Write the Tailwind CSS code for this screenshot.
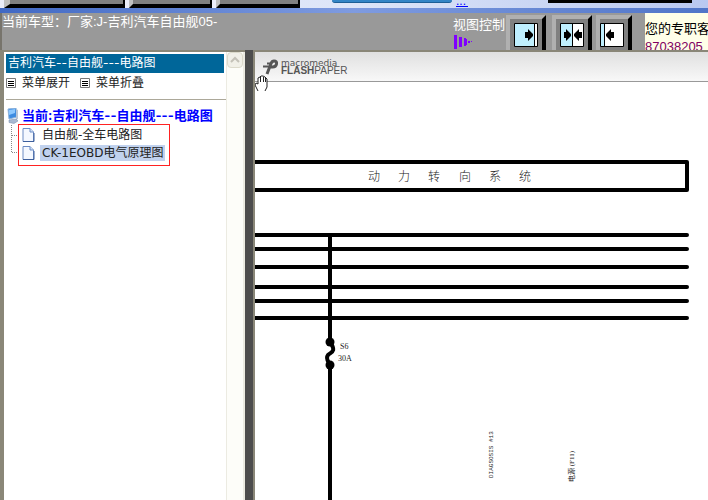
<!DOCTYPE html>
<html lang="zh-CN">
<head>
  <meta charset="UTF-8">
  <meta name="viewport" content="width=device-width, initial-scale=1.0">
  <title>吉利汽车--自由舰---电路图</title>
  <script src="https://cdn.jsdelivr.net/npm/@tailwindcss/browser@4"></script>
</head>
<body class="h-screen flex flex-col overflow-hidden bg-[#999] font-['Liberation_Sans','Noto_Sans_CJK_SC',sans-serif]">

  <!-- Toolbar -->
  <div class="h-2 shrink-0 flex bg-linear-to-r from-[#e6ebfa] via-[#dde5f8] to-[#b9c8f0] overflow-hidden">
    <div class="w-[300px] shrink-0 flex gap-1 pl-1 bg-[#eceefa]">
      <button class="w-[121px] bg-[#808080] border-b-4 border-r-2 border-l-6 border-black border-l-[#c0c0c0]" aria-label="菜单一"></button>
      <button class="w-[83px] bg-[#808080] border-b-4 border-r-2 border-l-4 border-black border-l-[#c0c0c0]" aria-label="菜单二"></button>
      <button class="w-[84px] bg-[#808080] border-b-4 border-r-2 border-l-4 border-black border-l-[#c0c0c0]" aria-label="菜单三"></button>
    </div>
    <div class="ml-8 w-30 h-[3px] rounded-b bg-[#3385c6] border-b border-[#1d5f96]"></div>
    <a href="#" class="ml-1 w-3 h-[7px] border-b border-[#00f] text-[#00f] text-[12px] leading-[2px]">...</a>
    <div class="ml-20 w-36 h-[3px] bg-black"></div>
  </div>
  <div class="h-[5px] shrink-0 bg-linear-to-r from-[#4169c4] via-[#7f9be0] to-[#5075c8]"></div>

  <!-- Header -->
  <header class="h-[37px] shrink-0 flex border-l-2 border-[#77746c] bg-[#999] text-white text-[13px] overflow-hidden">
    <h1 class="flex-1 pt-px leading-4 whitespace-nowrap">当前车型：厂家:J-吉利汽车自由舰05-</h1>
    <div class="w-[53px] pt-1 leading-4 whitespace-nowrap">
      视图控制
      <svg class="block mt-0.5" width="22" height="14" fill="#8000ff">
        <rect x="1" y="0" width="3" height="14"/>
        <rect x="6" y="2" width="3" height="10"/>
        <path d="M11 3h2v1h1v6h-1v1h-2z"/>
        <path d="M15 6h2v2h-2zM18 6h1v1h-1z"/>
      </svg>
    </div>
    <div class="flex items-start pt-0.5 pr-[13px]">
      <button class="w-10 h-11 flex items-start pt-1 pl-1 bg-[#808080] border-4 border-[#b0b0b0] border-r-black border-b-black" aria-label="向右展开">
        <svg class="shrink-0" width="24" height="24">
          <path d="M.5 .5h23v23h-23z" fill="#fff" stroke="#000"/>
          <path d="M1 1h19v22H1z" fill="#bfefff"/>
          <path d="M20.500 1v22" stroke="#000"/>
          <path d="M11 9h3V6l5 5v2l-5 5v-3h-3z"/>
        </svg>
      </button>
      <button class="ml-1.5 w-10 h-11 flex items-start pt-1 pl-1 bg-[#808080] border-4 border-[#b0b0b0] border-r-black border-b-black" aria-label="居中">
        <svg class="shrink-0" width="24" height="24">
          <path d="M.5 .5h23v23h-23z" fill="#fff" stroke="#000"/>
          <path d="M1 1h11v22H1z" fill="#bfefff"/>
          <path d="M12.500 1v22" stroke="#000"/>
          <path d="M4 9h2V6l5 5v2l-5 5v-3H4zM22 9h-3V6l-5 5v2l5 5v-3h3z"/>
        </svg>
      </button>
      <button class="ml-1 w-9 h-11 flex items-start pt-1 bg-[#808080] border-4 border-[#b0b0b0] border-r-black border-b-black" aria-label="向左收起">
        <svg class="shrink-0" width="24" height="24">
          <path d="M.5 .5h23v23h-23z" fill="#fff" stroke="#000"/>
          <path d="M1 1h3v22H1z" fill="#bfefff"/>
          <path d="M4.500 1v22" stroke="#000"/>
          <path d="M14 9h-3V6l-5 5v2l5 5v-3h3z"/>
        </svg>
      </button>
    </div>
    <div class="w-[63px] bg-[#ffffe8] pt-2 text-black leading-4 whitespace-nowrap overflow-hidden">
      <p>您的专职客服</p>
      <p class="text-[#800060] leading-5">87038205</p>
    </div>
  </header>

  <div class="flex-1 min-h-0 flex">
    <!-- Tree menu -->
    <aside class="w-[245px] shrink-0 flex bg-white border-t-2 border-l-4 border-[#8a8778] text-[12px] text-[#222]">
      <div class="flex-1 min-w-0 pl-0.5">
        <h2 class="mt-0.5 mr-0.5 px-0.5 h-[19px] leading-[18px] bg-[#069] text-white font-['Inter','Noto_Sans_CJK_SC',sans-serif] whitespace-nowrap">吉利汽车--自由舰---电路图</h2>
        <div class="h-[27px] flex items-start pt-0.5 border-b border-[#aca899] leading-4">
          <button class="flex items-center gap-1.5">
            <svg width="10" height="10"><path d="M.5 .5h9v9h-9z" fill="#fff" stroke="#777"/><path d="M2 3.500h6M2 5.500h6M2 7.500h6" stroke="#000"/></svg>
            菜单展开
          </button>
          <button class="flex items-center gap-1.5 ml-2.5">
            <svg width="10" height="10"><path d="M.5 .5h9v9h-9z" fill="#fff" stroke="#777"/><path d="M2 3.500h6M2 5.500h6M2 7.500h6" stroke="#000"/></svg>
            菜单折叠
          </button>
        </div>
        <div class="flex items-center mt-2 h-4 gap-[3px] text-[13px] font-bold text-[#00f] whitespace-nowrap">
          <svg class="shrink-0" width="13" height="16">
            <path d="M2 1l8-1 1 9-8 2z" fill="#3d8be0" stroke="#8fb4dc"/>
            <path d="M3 2l6-1 0 4-6 2z" fill="#8cc8ff"/>
            <path d="M10 1l2 1v9l-2 1z" fill="#b8c4d4"/>
            <path d="M3 12l7-1 2 2-4 2.500-5-1z" fill="#a9bad2" stroke="#7288a8" stroke-width=".5"/>
          </svg>
          <a href="#" class="font-['Inter','Noto_Sans_CJK_SC',sans-serif]">当前:吉利汽车--自由舰---电路图</a>
        </div>
        <div class="flex font-['DejaVu_Sans','Noto_Sans_CJK_SC',sans-serif]">
          <svg class="shrink-0" width="12" height="42" fill="none" stroke="#888" stroke-dasharray="1 1">
            <path d="M5.500 1v27M6 11.500h6M6 28.500h6"/>
          </svg>
          <ul class="w-[152px] h-[42px] border border-[#f22] pt-px pl-[3px] whitespace-nowrap leading-4">
            <li class="h-[18px] flex items-center gap-[5px]">
              <svg width="13" height="14"><path d="M1 .5h7l3.500 3.500v9.500H1z" fill="#f4f8ff" stroke="#6c8cc4"/><path d="M8 .5V4h3.500" fill="#cfe0f8" stroke="#6c8cc4"/><path d="M1 13.500h11V5" fill="none" stroke="#3d5f9c"/></svg>
              <a href="#" class="px-0.5">自由舰-全车电路图</a>
            </li>
            <li class="h-[18px] flex items-center gap-[5px]">
              <svg width="13" height="14"><path d="M1 .5h7l3.500 3.500v9.500H1z" fill="#f4f8ff" stroke="#6c8cc4"/><path d="M8 .5V4h3.500" fill="#cfe0f8" stroke="#6c8cc4"/><path d="M1 13.500h11V5" fill="none" stroke="#3d5f9c"/></svg>
              <a href="#" class="px-0.5 bg-[#c1d2ee]">CK-1EOBD电气原理图</a>
            </li>
          </ul>
        </div>
      </div>
      <div class="w-[19px] bg-[#fdfdf9] border-l border-r-2 border-[#ecebe2]">
        <button class="block w-4 h-4 rounded-sm bg-[#f1f0e8] border border-[#dcdacb]" aria-label="向上滚动">
          <svg class="block mx-auto" width="10" height="8"><path d="M1 6l4-4 4 4" fill="none" stroke="#c4c2b8" stroke-width="2"/></svg>
        </button>
      </div>
    </aside>

    <div class="w-2 shrink-0 bg-[#4d4d4d]"></div>

    <!-- Document viewer -->
    <main class="relative flex-1 min-w-0 flex flex-col bg-white border-t-2 border-l-2 border-[#8a8778] overflow-hidden">
      <div class="h-[30px] shrink-0 flex items-center gap-[3px] pl-2 bg-linear-to-b from-[#e0e0e0] to-[#f8f8f8] border-b border-[#999] text-[#555]">
        <svg width="15" height="16" fill="none" stroke="#555">
          <path d="M4 15L8 4.500Q9 2 11 2Q14 2 13.500 5Q13 8 9.500 8H5" stroke-width="3"/>
          <path d="M4 4.500h4M0 7.500h5" stroke-width="2"/>
        </svg>
        <div>
          <p class="font-['DejaVu_Sans',sans-serif] text-[9px] leading-[8px]">macromedia</p>
          <p class="text-[10px] leading-[8px]"><b>FLASH</b>PAPER</p>
        </div>
      </div>
      <svg class="shrink-0" width="453" height="418" viewBox="255 82 453 418" font-family="'Liberation Serif','Noto Sans CJK SC',serif" font-size="8" fill="#222">
        <g fill="none" stroke="#000" stroke-width="4" stroke-linecap="round">
          <path d="M250 162H687V190H250" stroke-linejoin="round"/>
          <path d="M250 235H687M250 249H687M250 267H687M250 287H687M250 301H687M250 318H687"/>
          <path d="M330 235V342M330 365V505"/>
          <path d="M330 342C337 352 331 352 328 355C325 359 329 362 330 365"/>
        </g>
        <circle cx="330" cy="342" r="4.500" fill="#000"/>
        <circle cx="330" cy="365" r="4.500" fill="#000"/>
        <text x="368 398 428 459 489 519" y="181" font-size="12" font-weight="300">动力转向系统</text>
        <text x="340" y="349">S6</text>
        <text x="338" y="361">30A</text>
        <text transform="translate(493 478) rotate(-90)" font-size="6" font-family="'Liberation Mono',monospace">DIAGSOSIS #13</text>
        <text transform="translate(574 482) rotate(-90)" font-size="7">电源 (F11)</text>
      </svg>
      <!-- Hand cursor -->
      <svg class="absolute left-0 top-[23px]" width="14" height="18" fill="#fff" stroke="#222">
        <path d="M3 16L0 10 1 8 3 9V3L5 2 6 1H8L10 2 12 4V12L10 16" />
        <path d="M5.500 2v5M8.500 2v5M10.500 3v4" fill="none"/>
      </svg>
    </main>
  </div>

</body>
</html>
